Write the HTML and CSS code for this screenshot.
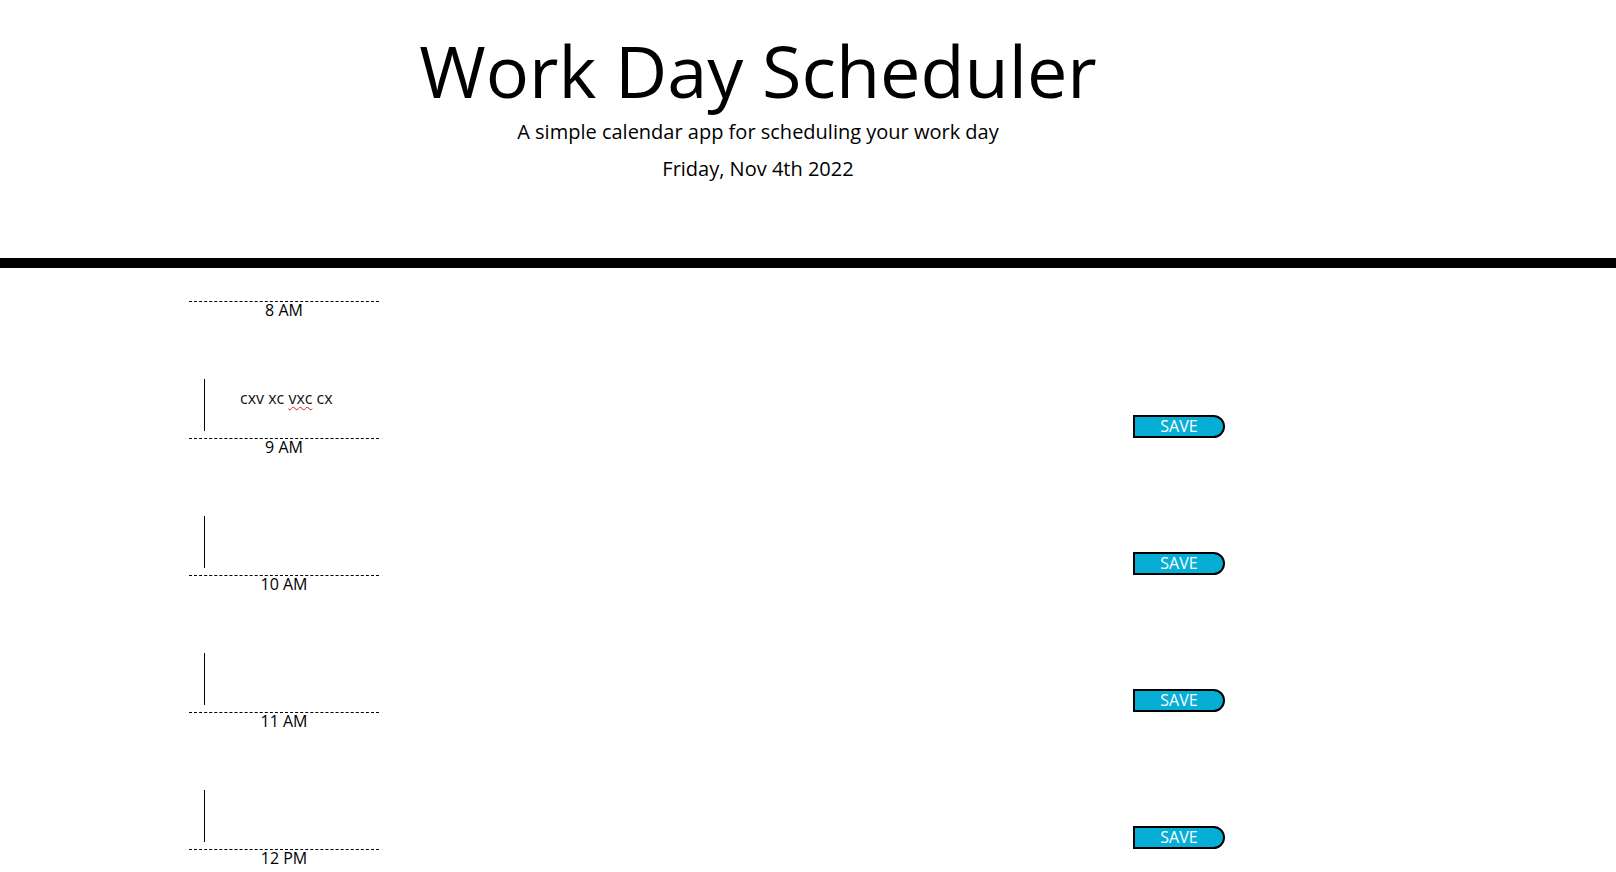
FILE: index.html
```html
<!DOCTYPE html>
<html lang="en">
<head>
<meta charset="utf-8">
<title>Work Day Scheduler</title>
<link rel="stylesheet" href="styles.css">
</head>
<body>
<header class="jumbotron">
  <h1 class="title">Work Day Scheduler</h1>
  <p class="lead">A simple calendar app for scheduling your work day</p>
  <p class="current-day">Friday, Nov 4th 2022</p>
</header>
<main class="schedule">
  <section class="time-block">
    <div class="hour">8 AM</div>
    <div class="entry">
      <div class="description" contenteditable="true">cxv xc <span class="misspelled">vxc</span> cx</div>
      <button class="save-btn">SAVE</button>
    </div>
  </section>
  <section class="time-block">
    <div class="hour">9 AM</div>
    <div class="entry">
      <div class="description" contenteditable="true"></div>
      <button class="save-btn">SAVE</button>
    </div>
  </section>
  <section class="time-block">
    <div class="hour">10 AM</div>
    <div class="entry">
      <div class="description" contenteditable="true"></div>
      <button class="save-btn">SAVE</button>
    </div>
  </section>
  <section class="time-block">
    <div class="hour">11 AM</div>
    <div class="entry">
      <div class="description" contenteditable="true"></div>
      <button class="save-btn">SAVE</button>
    </div>
  </section>
  <section class="time-block">
    <div class="hour">12 PM</div>
    <div class="entry">
      <div class="description" contenteditable="true"></div>
      <button class="save-btn">SAVE</button>
    </div>
  </section>
  <section class="time-block">
    <div class="hour">1 PM</div>
    <div class="entry">
      <div class="description" contenteditable="true"></div>
      <button class="save-btn">SAVE</button>
    </div>
  </section>
</main>
</body>
</html>
```

FILE: styles.css
```css
html, body {
  margin: 0;
  padding: 0;
  overflow: hidden;
}

body {
  font-family: "Open Sans", "Liberation Sans", sans-serif;
  color: #000;
  background: #fff;
}

.jumbotron {
  text-align: center;
  padding: 27px 100px 74px 0;
  border-bottom: 10px solid #000;
}

.title {
  margin: 0 0 4px;
  font-size: 72px;
  font-weight: 400;
  line-height: 1.2;
}

.lead {
  margin: 0 0 7px;
  font-size: 20px;
  font-weight: 400;
  line-height: 30px;
}

.current-day {
  margin: 0;
  font-size: 20px;
  font-weight: 400;
  line-height: 30px;
}

.schedule {
  padding-top: 33px;
}

.time-block {
  height: 137px;
}

.hour {
  margin-left: 189px;
  width: 190px;
  border-top: 1px dashed #000;
  text-align: center;
  font-size: 16px;
  line-height: 17px;
  height: 24px;
}

.entry {
  display: flex;
  align-items: flex-start;
  margin-top: 53px;
  height: 59px;
}

.description {
  margin-left: 204px;
  width: 893px;
  height: 32px;
  padding: 10px 0 10px 35px;
  border-left: 1px solid #000;
  font-size: 16px;
  line-height: 18px;
  color: #111;
  outline: none;
  white-space: pre-wrap;
}

.misspelled {
  text-decoration: underline wavy #e0201b;
  text-decoration-thickness: 1px;
  text-underline-offset: 2px;
}

.save-btn {
  margin-top: 36px;
  width: 92px;
  height: 23px;
  padding: 0;
  background: #06aed5;
  color: #fff;
  border: 2px solid #000;
  border-top-right-radius: 15px;
  border-bottom-right-radius: 15px;
  font-family: "Open Sans", "Liberation Sans", sans-serif;
  font-size: 16px;
  line-height: 19px;
}
```
